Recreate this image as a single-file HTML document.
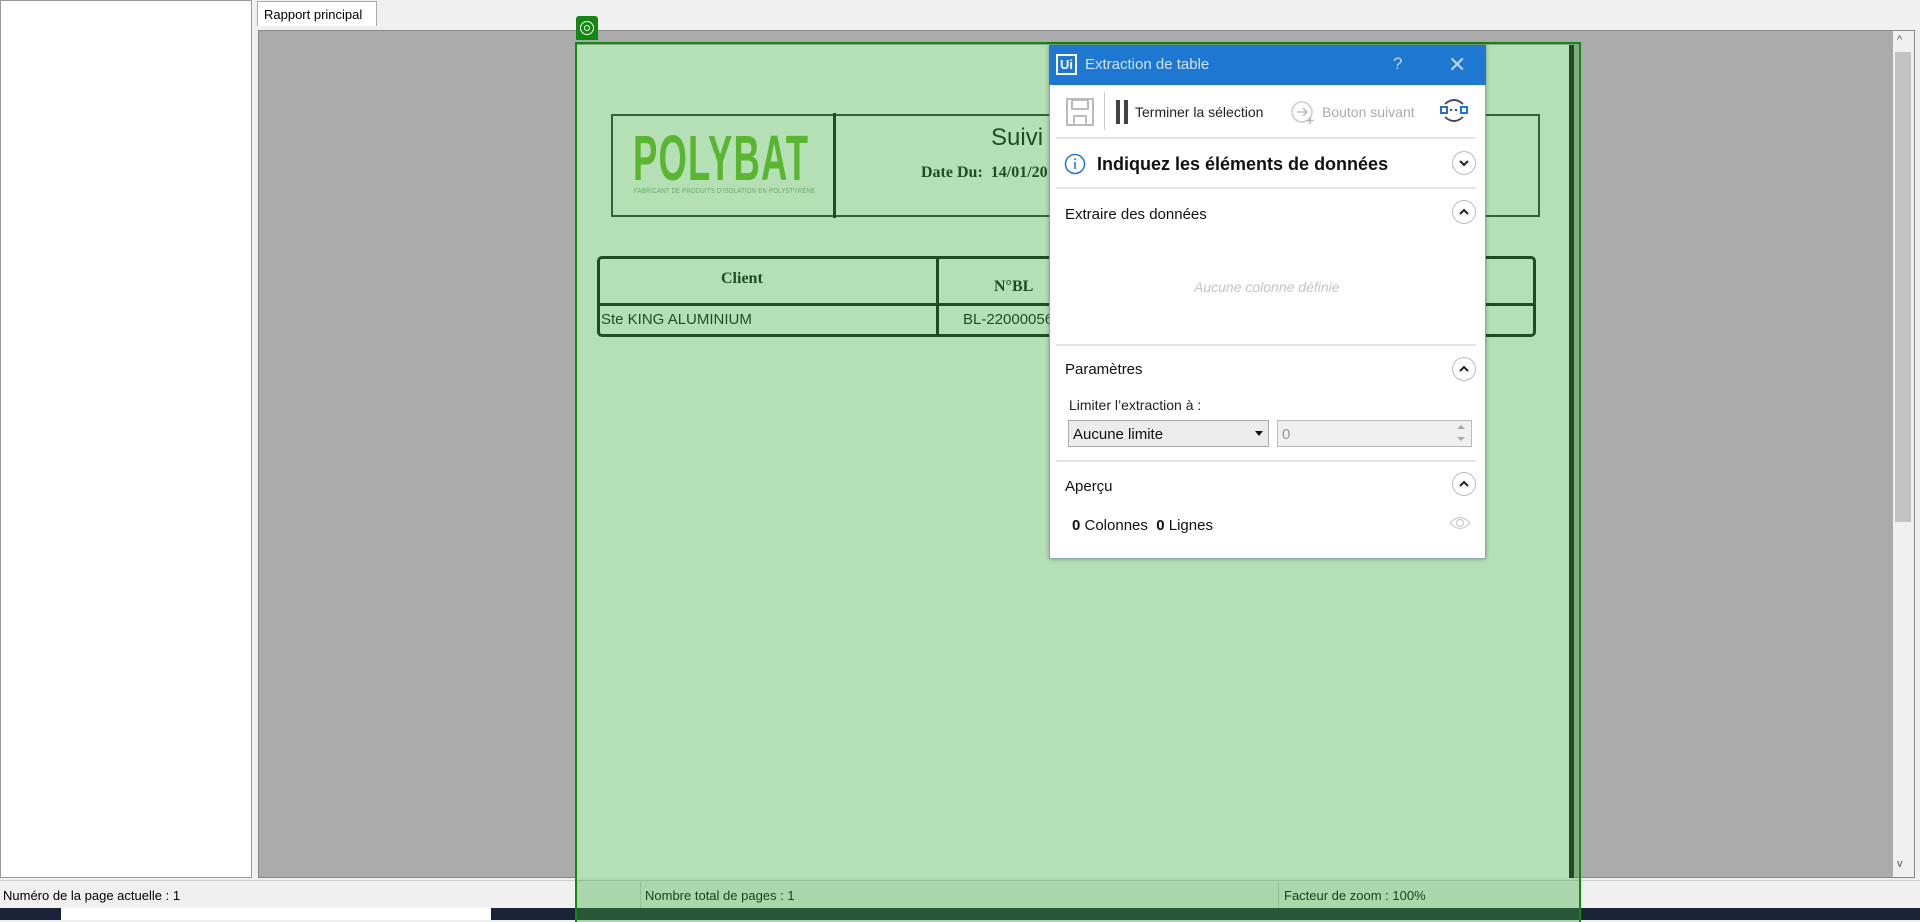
<!DOCTYPE html>
<html><head><meta charset="utf-8"><style>
*{margin:0;padding:0;box-sizing:border-box}
body{width:1920px;height:920px;position:relative;overflow:hidden;background:#f0f0f0;font-family:"Liberation Sans",sans-serif}
.a{position:absolute}
.sep{position:absolute;left:1056px;width:420px;height:2px;background:#e3e3e3}
.circ{position:absolute;width:24px;height:24px;border:1.5px solid #bbb;border-radius:50%;background:#fff}
.dl{font-family:"Liberation Sans",sans-serif}
</style></head><body>
<div class="a" style="left:0;top:0;width:252px;height:878px;background:#fff;border:1px solid #999"></div>
<div class="a" style="left:257px;top:1px;width:120px;height:25px;background:#fff;border:1px solid #aaa;border-bottom:none;font-size:13px;padding:5px 0 0 6px;color:#000">Rapport principal</div>
<div class="a" style="left:258px;top:30px;width:1657px;height:848px;background:#ababab;border:1px solid #888"></div>
<div class="a" style="left:1893px;top:31px;width:21px;height:846px;background:#f0f0f0"></div>
<div class="a" style="left:1895px;top:52px;width:16px;height:470px;background:#c2c2c2"></div>
<div class="a" style="left:1897px;top:34px;font-size:11px;color:#555">^</div>
<div class="a" style="left:1897px;top:858px;font-size:11px;color:#555">v</div>
<div class="a" style="left:577px;top:45px;width:997px;height:833px;background:#fff"></div>
<div class="a" style="left:1569px;top:45px;width:5px;height:833px;background:#111"></div>
<div class="a" style="left:611px;top:114px;width:929px;height:103px;border:2px solid #333"></div>
<div class="a" style="left:833px;top:113px;width:3px;height:105px;background:#111"></div>
<div class="a" style="left:633px;top:126px;font-size:64px;line-height:64px;font-weight:bold;letter-spacing:2px;color:#6dbb2a;transform:scaleX(.57);transform-origin:left">POLYBAT</div>
<div class="a" style="left:634px;top:188px;font-size:7px;color:#8a8;letter-spacing:.3px;transform:scaleX(.85);transform-origin:left">FABRICANT DE PRODUITS D'ISOLATION EN POLYSTYRÈNE</div>
<div class="a" style="left:991px;top:124px;font-size:24px;color:#111">Suivi</div>
<div class="a" style="left:921px;top:164px;font-size:16px;font-weight:bold;color:#111;font-family:'Liberation Serif',serif">Date Du:&nbsp; 14/01/20</div>
<div class="a" style="left:597px;top:256px;width:939px;height:81px;border:3px solid #111;border-radius:5px"></div>
<div class="a" style="left:598px;top:303px;width:937px;height:3px;background:#111"></div>
<div class="a" style="left:936px;top:256px;width:3px;height:80px;background:#111"></div>
<div class="a" style="left:721px;top:270px;font-size:16px;font-weight:bold;color:#111;font-family:'Liberation Serif',serif">Client</div>
<div class="a" style="left:994px;top:278px;font-size:16px;font-weight:bold;color:#111;font-family:'Liberation Serif',serif">N°BL</div>
<div class="a" style="left:601px;top:311px;font-size:15px;color:#111">Ste KING ALUMINIUM</div>
<div class="a" style="left:963px;top:311px;font-size:15px;color:#111">BL-22000056</div>
<div class="a" style="left:0;top:880px;width:1920px;height:28px;background:#f0f0f0;border-top:1px solid #ccc"></div>
<div class="a" style="left:3px;top:888px;font-size:13px;color:#000">Numéro de la page actuelle : 1</div>
<div class="a" style="left:640px;top:882px;width:1px;height:26px;background:#ccc"></div>
<div class="a" style="left:645px;top:888px;font-size:13px;color:#000">Nombre total de pages : 1</div>
<div class="a" style="left:1278px;top:882px;width:1px;height:26px;background:#ccc"></div>
<div class="a" style="left:1284px;top:888px;font-size:13px;color:#000">Facteur de zoom : 100%</div>
<div class="a" style="left:0;top:908px;width:1920px;height:12px;background:#1b2338"></div>
<div class="a" style="left:61px;top:908px;width:430px;height:12px;background:#fff"></div>
<div class="a" style="left:575px;top:42px;width:1006px;height:880px;background:rgba(60,170,60,.38);border:2px solid #128712;border-bottom:none"></div>
<div class="a" style="left:576px;top:16px;width:22px;height:24px;background:#128712;border-radius:3px 3px 0 0"></div>
<div class="a" style="left:580px;top:21px;width:14px;height:14px;border:1.5px solid #fff;border-radius:50%"></div>
<div class="a" style="left:584px;top:25px;width:6px;height:6px;border:1.5px solid #fff;border-radius:50%"></div>
<div class="a dl" style="left:1049px;top:45px;width:437px;height:514px;background:#fff;border:1px solid #8aa;box-shadow:0 0 4px rgba(0,0,0,.3)"></div>
<div class="a" style="left:1049px;top:45px;width:437px;height:40px;background:#1e78d2"></div>
<div class="a" style="left:1056px;top:54px;width:21px;height:21px;border:2px solid #fff;color:#fff;font-size:13px;font-weight:bold;line-height:17px;text-align:center">Ui</div>
<div class="a dl" style="left:1085px;top:56px;font-size:15px;color:#cfe2f6">Extraction de table</div>
<div class="a dl" style="left:1393px;top:54px;font-size:17px;color:#b8d4f0">?</div>
<div class="a" style="left:1448px;top:54px;font-size:22px;color:#b8d4f0;line-height:22px">✕</div>
<svg class="a" style="left:1066px;top:98px" width="28" height="28"><rect x="1" y="1" width="26" height="26" fill="none" stroke="#bbb" stroke-width="2"/><rect x="6" y="2" width="16" height="9" fill="none" stroke="#bbb" stroke-width="2"/><rect x="8" y="18" width="12" height="9" fill="none" stroke="#bbb" stroke-width="2"/></svg>
<div class="a" style="left:1104px;top:92px;width:1px;height:38px;background:#ccc"></div>
<div class="a" style="left:1116px;top:100px;width:4px;height:24px;background:#444"></div>
<div class="a" style="left:1124px;top:100px;width:4px;height:24px;background:#444"></div>
<div class="a dl" style="left:1135px;top:104px;font-size:14px;color:#222">Terminer la sélection</div>
<svg class="a" style="left:1291px;top:100px" width="24" height="26"><circle cx="11" cy="12" r="10" fill="none" stroke="#ccc" stroke-width="1.5"/><path d="M6 12h10M12 8l4 4-4 4" fill="none" stroke="#bbb" stroke-width="1.5"/><path d="M19 17v7M15.5 20.5h7" stroke="#9c9" stroke-width="1.5"/></svg>
<div class="a dl" style="left:1322px;top:104px;font-size:14px;color:#aaa">Bouton suivant</div>
<svg class="a" style="left:1439px;top:97px" width="30" height="30"><rect x="2" y="10" width="6" height="6" fill="none" stroke="#2a6ec0" stroke-width="2"/><rect x="22" y="10" width="6" height="6" fill="none" stroke="#1e78d2" stroke-width="2"/><path d="M11 13h2M16 13h2" stroke="#446" stroke-width="2"/><path d="M6 7q9-8 18 0M24 20q-9 8-18 0" fill="none" stroke="#445" stroke-width="1.8"/></svg>
<div class="sep" style="top:137px"></div>
<svg class="a" style="left:1064px;top:153px" width="22" height="22"><circle cx="11" cy="11" r="9.5" fill="none" stroke="#1e78d2" stroke-width="1.5"/><path d="M11 9v7" stroke="#1e78d2" stroke-width="1.6"/><circle cx="11" cy="6.3" r="1" fill="#1e78d2"/></svg>
<div class="a dl" style="left:1097px;top:154px;font-size:18px;font-weight:bold;color:#111">Indiquez les éléments de données</div>
<div class="circ" style="left:1452px;top:151px"></div><svg class="a" style="left:1458px;top:158px" width="12" height="10"><path d="M2 3l4 4 4-4" fill="none" stroke="#222" stroke-width="2"/></svg>
<div class="sep" style="top:187px"></div>
<div class="a dl" style="left:1065px;top:206px;font-size:15px;color:#111">Extraire des données</div>
<div class="circ" style="left:1452px;top:200px"></div><svg class="a" style="left:1458px;top:207px" width="12" height="10"><path d="M2 7l4-4 4 4" fill="none" stroke="#222" stroke-width="2"/></svg>
<div class="a dl" style="left:1194px;top:279px;font-size:14px;font-style:italic;color:#c4c4c4">Aucune colonne définie</div>
<div class="sep" style="top:344px"></div>
<div class="a dl" style="left:1065px;top:361px;font-size:15px;color:#111">Paramètres</div>
<div class="circ" style="left:1452px;top:357px"></div><svg class="a" style="left:1458px;top:364px" width="12" height="10"><path d="M2 7l4-4 4 4" fill="none" stroke="#222" stroke-width="2"/></svg>
<div class="a dl" style="left:1069px;top:397px;font-size:14px;color:#222">Limiter l’extraction à :</div>
<div class="a" style="left:1068px;top:420px;width:201px;height:27px;background:#ececec;border:1px solid #aaa"></div>
<div class="a dl" style="left:1073px;top:426px;font-size:15px;color:#111">Aucune limite</div>
<div class="a" style="left:1255px;top:431px;width:0;height:0;border-left:4px solid transparent;border-right:4px solid transparent;border-top:5px solid #111"></div>
<div class="a" style="left:1277px;top:420px;width:195px;height:27px;background:#f0f0f0;border:1px solid #bbb"></div>
<div class="a dl" style="left:1282px;top:426px;font-size:15px;color:#999">0</div>
<div class="a" style="left:1457px;top:425px;border-left:4px solid transparent;border-right:4px solid transparent;border-bottom:4px solid #aaa"></div>
<div class="a" style="left:1457px;top:437px;border-left:4px solid transparent;border-right:4px solid transparent;border-top:4px solid #aaa"></div>
<div class="sep" style="top:460px"></div>
<div class="a dl" style="left:1065px;top:478px;font-size:15px;color:#111">Aperçu</div>
<div class="circ" style="left:1452px;top:472px"></div><svg class="a" style="left:1458px;top:479px" width="12" height="10"><path d="M2 7l4-4 4 4" fill="none" stroke="#222" stroke-width="2"/></svg>
<div class="a dl" style="left:1072px;top:517px;font-size:15px;color:#111"><b>0</b> Colonnes&nbsp; <b>0</b> Lignes</div>
<svg class="a" style="left:1449px;top:515px" width="22" height="16"><path d="M1 8q10-11 20 0q-10 11-20 0z" fill="none" stroke="#ccc" stroke-width="1.3"/><circle cx="11" cy="8" r="3.5" fill="none" stroke="#ccc" stroke-width="1.3"/></svg>
</body></html>
